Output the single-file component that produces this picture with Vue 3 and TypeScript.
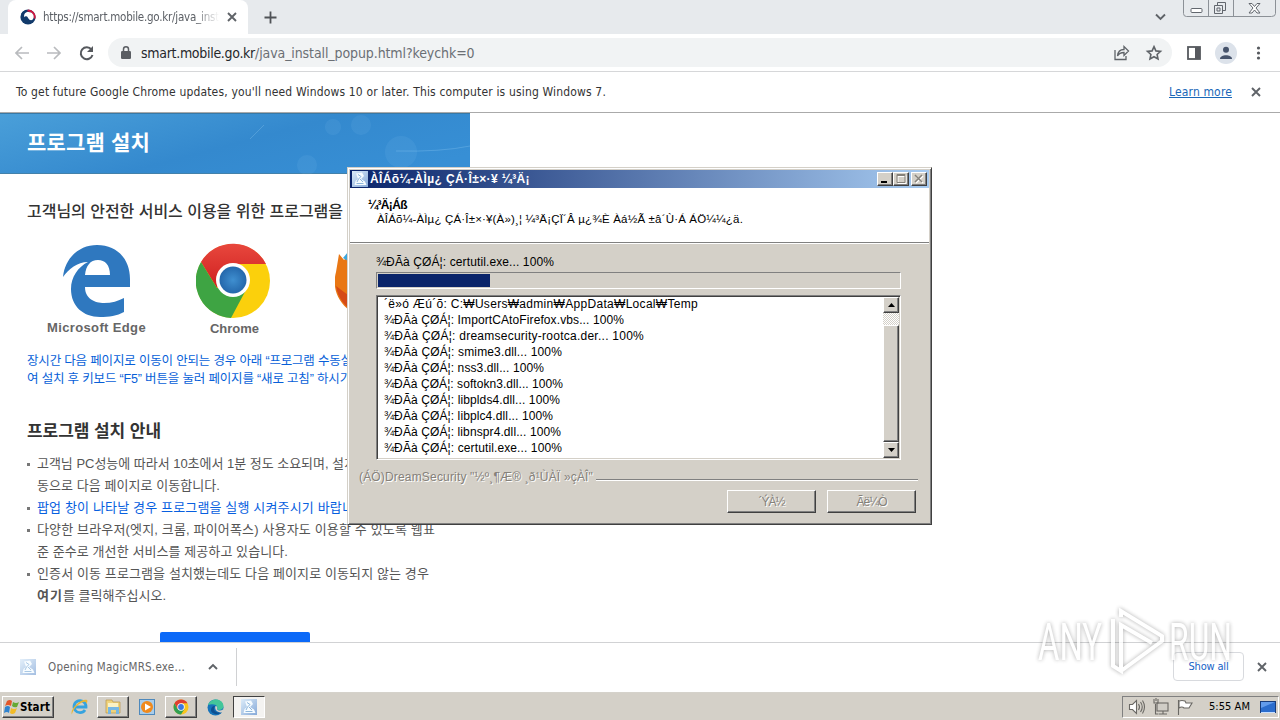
<script setup lang="ts">
import type { Directive } from 'vue'

// Spreads the letters of an inline block so that the run takes the given width.
const vFit: Directive<HTMLElement, number> = {
  mounted(el, binding) {
    const natural = el.getBoundingClientRect().width
    const count = [...(el.textContent ?? '')].length
    el.style.letterSpacing = `${(binding.value - natural) / count}px`
  },
}

interface Line { text: string; width: number }
interface Notice { lines: Line[]; accent?: boolean }

const notices: Notice[] = [
  { lines: [
    { text: '고객님 PC성능에 따라서 10초에서 1분 정도 소요되며, 설치', width: 319 },
    { text: '동으로 다음 페이지로 이동합니다.', width: 183 },
  ] },
  { accent: true, lines: [{ text: '팝업 창이 나타날 경우 프로그램을 실행 시켜주시기 바랍니', width: 317 }] },
  { lines: [
    { text: '다양한 브라우저(엣지, 크롬, 파이어폭스) 사용자도 이용할 수 있도록 웹표', width: 398 },
    { text: '준 준수로 개선한 서비스를 제공하고 있습니다.', width: 251 },
  ] },
  { lines: [{ text: '인증서 이동 프로그램을 설치했는데도 다음 페이지로 이동되지 않는 경우', width: 392 }] },
]

const unpack = '¾ÐÃà ÇØÁ¦: '
const log: Line[] = [
  { text: '´ë»ó Æú´õ: C:₩Users₩admin₩AppData₩Local₩Temp', width: 314 },
  { text: unpack + 'ImportCAtoFirefox.vbs... 100%', width: 240 },
  { text: unpack + 'dreamsecurity-rootca.der... 100%', width: 260 },
  { text: unpack + 'smime3.dll... 100%', width: 178 },
  { text: unpack + 'nss3.dll... 100%', width: 160 },
  { text: unpack + 'softokn3.dll... 100%', width: 179 },
  { text: unpack + 'libplds4.dll... 100%', width: 176 },
  { text: unpack + 'libplc4.dll... 100%', width: 169 },
  { text: unpack + 'libnspr4.dll... 100%', width: 177 },
  { text: unpack + 'certutil.exe... 100%', width: 178 },
]
</script>

<template>
  <div class="screen">
    <svg class="defs" width="0" height="0">
      <defs>
        <linearGradient id="app-bg" x1="0" y1="0" x2="1" y2="1">
          <stop offset="0" stop-color="#dcecf9" /><stop offset="1" stop-color="#86a9d8" />
        </linearGradient>
        <radialGradient id="ball"><stop offset="0" stop-color="#3f8fd0" /><stop offset="1" stop-color="#2467ab" /></radialGradient>
        <linearGradient id="red" x1="0" y1="0" x2="0" y2="1"><stop offset="0" stop-color="#e8473d" /><stop offset="1" stop-color="#cf2020" /></linearGradient>
        <symbol id="installer" viewBox="0 0 16 16">
          <rect width="16" height="16" fill="url(#app-bg)" />
          <path d="M4 2.500l6-1 2 3.500-3 3 4 2.500 1.500 3.500H2.500l1-4L6 8z" fill="#f5fbff" />
          <path d="M6 3.500l3 2L6.500 8 5 11M8 8l3 3M4.500 12.500h7" stroke="#8db6dc" fill="none" />
        </symbol>
        <symbol id="cross" viewBox="0 0 10 10"><path d="M1 1l8 8M9 1L1 9" stroke="#5f6368" stroke-width="1.9" fill="none" /></symbol>
      </defs>
    </svg>

    <header class="tabstrip">
      <div class="tab">
        <svg class="favicon" width="16" height="16" viewBox="0 0 16 16">
          <circle cx="8" cy="8" r="7.6" fill="#123a6b" />
          <path d="M1 5a7.600 7.600 0 0 1 14 5c-.3-3-2-5-5-4.600C7 6 7 4 4.500 4 3 4 2 4.500 1 5z" fill="#123a6b" />
          <path d="M8 .4a7.600 7.600 0 0 1 7.300 9.600L13.500 9C14 5 11 2.500 7 2.500z" fill="#d2163f" />
          <path d="M4.200 8.300C3.500 4.500 6 2.800 8.500 3c3.500 0 6 3 5 6-.8 2.500-2.500 2.500-4 1.800C8 9.800 8 7.800 6.400 7.300c-1-.2-1.800.2-2.200 1z" fill="#fff" />
        </svg>
        <div class="tab-title"><span v-fit="176" class="fit">https://smart.mobile.go.kr/java_inst</span></div>
        <svg class="tab-close" width="10" height="10"><use href="#cross" /></svg>
      </div>
      <svg class="plus" width="13" height="13" viewBox="0 0 13 13"><path d="M6.500 .5v12M.5 6.500h12" stroke="#505357" stroke-width="1.800" /></svg>
      <svg class="tab-search" width="11" height="8" viewBox="0 0 11 8"><path d="M1 1.500l4.500 4.500L10 1.500" stroke="#5f6368" stroke-width="1.900" fill="none" /></svg>
      <svg class="caption" width="94" height="18" viewBox="0 0 94 18">
        <path d="M.5 0v13.500q0 3 3 3h85q4 0 4-3V0M25.500 0v16M50.500 0v16" stroke="#8c9197" fill="none" />
        <rect x="8" y="8.500" width="11" height="4" rx="1" fill="#fff" stroke="#62676e" />
        <path d="M34.500 5v-2.500h8v8H40M31.500 5.500h8v8h-8zM34 8h3v3h-3z" fill="none" stroke="#62676e" />
        <path d="M66 3.500h3l2.500 3 2.500-3h3l-4 4.500 4 5h-3l-2.500-3-2.500 3h-3l4-5z" fill="#fff" stroke="#62676e" />
      </svg>
    </header>

    <div class="toolbar">
      <svg class="nav" width="80" height="18" viewBox="0 0 80 18">
        <g fill="none" stroke="#b9bbbe" stroke-width="1.700">
          <path d="M14 9H1M7 3L1 9l6 6M32 9h13M39 3l6 6-6 6" />
          <path d="M76.500 5.500A6 6 0 1 0 77.500 11" stroke="#56595e" stroke-width="2" />
        </g>
        <path d="M78 2v6h-6z" fill="#56595e" />
      </svg>
      <div class="omnibox">
        <svg class="lock" width="10" height="13" viewBox="0 0 10 13"><rect y="5" width="10" height="8" rx="1.300" fill="#5a5d62" /><path d="M2.500 5V3.300a2.500 2.500 0 0 1 5 0V5" stroke="#5a5d62" stroke-width="1.500" fill="none" /></svg>
        <div class="url"><span v-fit="114" class="fit host">smart.mobile.go.kr</span><span v-fit="219.500" class="fit">/java_install_popup.html?keychk=0</span></div>
        <svg class="omni-icons" width="50" height="18" viewBox="0 0 50 18">
          <g fill="none" stroke="#5f6368" stroke-width="1.300">
            <path d="M2 6v9.500h11V12M4.500 12c.4-4.500 2.500-6.500 6.500-6.500V2.500l4.500 4.500-4.500 4.500v-3c-3 0-5 .8-6.500 3.500z" />
            <path d="M41 2.700l1.900 4.200 4.600.5-3.400 3.100.9 4.500-4-2.300-4 2.300.9-4.500-3.400-3.100 4.600-.5z" stroke-width="1.600" />
          </g>
        </svg>
      </div>
      <svg class="tools" width="82" height="24" viewBox="0 0 82 24">
        <rect x="2" y="6" width="12" height="12" fill="none" stroke="#56595e" stroke-width="1.800" />
        <rect x="9" y="6" width="5" height="12" fill="#56595e" />
        <circle cx="40" cy="12" r="11" fill="#dce2ea" /><circle cx="40" cy="8.700" r="3" fill="#46536b" /><path d="M34 18c0-5 12-5 12 0z" fill="#46536b" />
        <g fill="#56595e"><circle cx="72.500" cy="7" r="1.600" /><circle cx="72.500" cy="12" r="1.600" /><circle cx="72.500" cy="17" r="1.600" /></g>
      </svg>
    </div>

    <div class="infobar">
      <span v-fit="590" class="fit">To get future Google Chrome updates, you'll need Windows 10 or later. This computer is using Windows 7.</span>
      <a v-fit="63" class="fit learn">Learn more</a>
      <svg width="10" height="10"><use href="#cross" /></svg>
    </div>

    <main class="page">
      <div class="banner">
        <svg class="bubbles" width="470" height="61" viewBox="0 0 470 61" fill="#b8e2ff">
          <g opacity=".07"><circle cx="361" cy="11" r="10" /><circle cx="401" cy="38" r="16" /><circle cx="333" cy="13" r="8" /><circle cx="307" cy="51" r="10" /></g>
          <path d="M396 37q45 1 74-5M250 25l14-14" stroke="#b8e2ff" opacity=".22" fill="none" />
        </svg>
        <h1><span v-fit="123" class="fit">프로그램 설치</span></h1>
      </div>
      <h2><span v-fit="316" class="fit">고객님의 안전한 서비스 이용을 위한 프로그램을</span></h2>
      <div class="browsers">
        <figure class="edge">
          <svg width="68" height="74" viewBox="0 0 68 74"><path fill="#2f78bf" d="M0 33C2 13 17 1 34 1c21 0 33 15 33 34v8H22c0 12 10 16 19 16 8 0 14-2 20-5v14c-7 4-15 5-24 5C20 73 8 62 8 45c0-12 7-22 17-27C14 18 6 25 0 33zm22-2h25c0-10-5-15-12-15-8 0-12 6-13 15z" /></svg>
          <figcaption><span v-fit="99" class="fit">Microsoft Edge</span></figcaption>
        </figure>
        <figure class="chrome">
          <svg width="74" height="76" viewBox="-37 -37 74 76">
            <circle r="37" cy="1" fill="#fbd00c" />
            <path d="M-32-18A37 37 0 0 1 33-16H0L-16 8z" fill="url(#red)" />
            <path d="M-32-18A37 37 0 0 0-2 38L14 8-16 8z" fill="#3ea443" />
            <circle r="17" cy="0" fill="#fff" /><circle r="13.500" fill="url(#ball)" />
          </svg>
          <figcaption><span v-fit="49" class="fit">Chrome</span></figcaption>
        </figure>
        <figure class="firefox">
          <svg width="70" height="76" viewBox="0 0 70 76"><circle cx="38" cy="38" r="33" fill="#2b8fd4" /><path d="M1 29L4 11l5 6 2-2 4 4L15 68C2 58-3 44 1 29z" fill="#e97714" /><path d="M8 15l5-6v9z" fill="#3ba6dd" /><path d="M1 43c2 12 8 20 20 28V58z" fill="#d54a16" /></svg>
          <figcaption>Firefox</figcaption>
        </figure>
      </div>
      <p class="hint">
        <span v-fit="325" class="fit">장시간 다음 페이지로 이동이 안되는 경우 아래 “프로그램 수동설</span><br>
        <span v-fit="324" class="fit">여 설치 후 키보드 “F5” 버튼을 눌러 페이지를 “새로 고침” 하시기</span>
      </p>
      <h3><span v-fit="134" class="fit">프로그램 설치 안내</span></h3>
      <ul>
        <li v-for="(notice, i) in notices" :key="i" :class="{ accent: notice.accent }">
          <div v-for="line in notice.lines" :key="line.text"><span v-fit="line.width" class="fit">{{ line.text }}</span></div>
          <div v-if="i === notices.length - 1"><b v-fit="26" class="fit">여기</b><span v-fit="103" class="fit">를 클릭해주십시오.</span></div>
        </li>
      </ul>
      <div class="manual"></div>
    </main>

    <footer class="shelf">
      <div class="download">
        <svg width="16" height="16" opacity=".75"><use href="#installer" /></svg>
        <span v-fit="137" class="fit">Opening MagicMRS.exe...</span>
        <svg class="chevron" width="10" height="7" viewBox="0 0 10 7"><path d="M1 6l4-4 4 4" stroke="#5f6368" stroke-width="1.900" fill="none" /></svg>
      </div>
      <div class="show-all"><span v-fit="40" class="fit">Show all</span></div>
      <svg class="shelf-close" width="10" height="10"><use href="#cross" /></svg>
    </footer>

    <div class="taskbar">
      <div class="start raised">
        <svg width="16" height="16" viewBox="0 0 16 16"><path d="M3 2q3-2 5 0L7 7Q4 5 1 7z" fill="#e2572b" /><path d="M9 3q3 2 6 0l-2 5q-3 1-5-1z" fill="#66a933" /><path d="M1 8q3-2 5 0l-1 6Q3 12 0 14z" fill="#2f83cf" /><path d="M7 9q3 2 6 0l-2 5q-3 2-5 0z" fill="#f2bb27" /></svg>
        <b v-fit="30" class="fit">Start</b>
      </div>
      <div class="task"><svg width="18" height="18" viewBox="0 0 18 18"><path d="M15 12a6 6 0 1 1 1-3H4" fill="none" stroke="#36a3df" stroke-width="2.800" /><path d="M2 16.500C-1 12 11 0 17 2c1 1 0 3-1 4 1-5-7-1-11 4-2 3-3 5-3 6.500z" fill="#e8b635" /></svg></div>
      <div class="task raised"><svg width="18" height="18" viewBox="0 0 18 18"><path d="M2 2h6l1 2h7v11H2z" fill="#efd37c" stroke="#b9964a" stroke-width=".7" /><path d="M4 5h10v4H4z" fill="#fbf2c4" /><path d="M4 16V9h11v7h-3v-4H7v4z" fill="#76b7e4" /></svg></div>
      <div class="task"><svg width="16" height="16" viewBox="0 0 16 16"><rect x=".5" y=".5" width="15" height="15" fill="#a9cdea" stroke="#4e89bc" /><circle cx="8" cy="8" r="6" fill="#f08a1d" /><path d="M6 4.500v7l6-3.500z" fill="#fff" /></svg></div>
      <div class="task raised"><svg width="16" height="16" viewBox="-8 -8 16 16"><circle r="7.500" fill="#f9c51d" /><path d="M-6.500-3.700A7.500 7.500 0 0 1 6.500-3.700H0L-3.500 2z" fill="#df3f31" /><path d="M-6.500-3.700A7.500 7.500 0 0 0 0 7.500L3.500 2h-7z" fill="#31a052" /><circle r="3.700" fill="#fff" /><circle r="2.900" fill="#3c79e0" /></svg></div>
      <div class="task"><svg width="17" height="17" viewBox="0 0 17 17"><circle cx="8.500" cy="8.500" r="8" fill="#1673ba" /><path d="M1 6C4-2 16-1 16.500 7c0 4-5 5-6.500 3 2-4-4-6-9-4z" fill="#43c69a" /><path d="M8 7c-3 4 1 8 7 6-3 3-9 3-11-1 0-3 1-5 4-5z" fill="#0e4f91" /><path d="M8.500 7c2 0 2 2 1.500 3 1 2 4 2 6 .5l1 1-1 2C11 14 7 11 8.500 7z" fill="#d4d0c8" /></svg></div>
      <div class="task pressed"><svg width="16" height="16"><use href="#installer" /></svg></div>
      <div class="tray">
        <svg width="66" height="18" viewBox="0 0 66 18">
          <g fill="#fff" stroke="#6a6864" stroke-width="1.100"><path d="M1.500 6.500h3l4-4v13l-4-4h-3z" /><path d="M10.500 6q2 3 0 6M12.500 4q3.500 5 0 10M14.500 2.500q4 6.500 0 13" fill="none" />
            <rect x="29" y="5" width="11" height="8" fill="#d0cdc6" /><path d="M31 16h8M35 13v3M27.500 6v10h3M26 1v4h4V1M28 0v3" fill="none" /><path d="M50.500 17V2M51 3q3-1 6 0l1 2h6l-3 5h-5q-2-2-5 0z" /></g>
        </svg>
        <span v-fit="41" class="fit">5:55 AM</span>
        <svg class="desk" width="16" height="13" viewBox="0 0 16 13"><rect x=".5" y=".5" width="15" height="11" fill="#2b6dcd" stroke="#183c7a" /><path d="M1 1h14L1 7z" fill="#629cec" /><path d="M1 11.500h14" stroke="#c8dfff" /></svg>
      </div>
    </div>

    <section class="dialog">
      <div class="titlebar">
        <svg width="16" height="16"><use href="#installer" /></svg>
        <b v-fit="160" class="fit">ÀÎÁõ¼-ÀÌµ¿ ÇÁ·Î±×·¥ ¼³Ä¡</b>
        <div class="controls">
          <i><svg width="12" height="10"><path d="M2 8h6" stroke="#000" stroke-width="2" /></svg></i>
          <i><svg width="12" height="10"><path d="M2 .5h8v8H2zM2 1.500h8" stroke="#fff" fill="none" transform="translate(1 1)" /><path d="M2 .5h8v8H2zM2 1.500h8" stroke="#85817a" fill="none" /></svg></i>
          <i><svg width="12" height="10"><path d="M3 2l7 7M10 2L3 9" stroke="#fff" stroke-width="1.500" /><path d="M2 1l7 7M9 1L2 8" stroke="#85817a" stroke-width="1.500" /></svg></i>
        </div>
      </div>
      <div class="intro">
        <div class="intro-title"><b v-fit="39" class="fit">¼³Ä¡Áß</b></div>
        <div class="intro-text"><span v-fit="366" class="fit">ÀÎÁõ¼-ÀÌµ¿ ÇÁ·Î±×·¥(À»)¸¦ ¼³Ä¡ÇÏ´Â µ¿¾È Àá½Ã ±â´Ù·Á ÁÖ¼¼¿ä.</span></div>
      </div>
      <div class="status"><span v-fit="178" class="fit">{{ unpack }}certutil.exe... 100%</span></div>
      <div class="progress"><div class="bar"></div></div>
      <div class="log">
        <div class="rows"><div v-for="row in log" :key="row.text"><span v-fit="row.width" class="fit">{{ row.text }}</span></div></div>
        <div class="scroll">
          <div class="arrow"><svg width="7" height="4"><path d="M0 4l3.500-4L7 4z" /></svg></div>
          <div class="thumb"></div>
          <div class="arrow"><svg width="7" height="4"><path d="M0 0h7L3.500 4z" /></svg></div>
        </div>
      </div>
      <div class="brand"><span v-fit="234" class="fit">(ÁÖ)DreamSecurity "½º¸¶Æ® ¸ð¹ÙÀÏ »çÀÎ"</span><hr></div>
      <div class="buttons">
        <div class="button"><span v-fit="26" class="fit">´ÝÀ½</span></div>
        <div class="button"><span v-fit="30" class="fit">Ãë¼Ò</span></div>
      </div>
    </section>

    <svg class="watermark" width="204" height="72" viewBox="0 0 204 72">
      <g fill="#fff">
        <text x="4" y="55" textLength="64" lengthAdjust="spacingAndGlyphs">ANY</text>
        <text x="135" y="55" textLength="63" lengthAdjust="spacingAndGlyphs">RUN</text>
        <path d="M79 14v47l8 5V20l31 18M87 12V6l41 25v5L87 66" fill="none" stroke="#fff" stroke-width="4" />
      </g>
    </svg>
  </div>
</template>

<style>
html, body { overflow: hidden; background: #fff; }
</style>

<style scoped>
* { box-sizing: border-box; }
.screen { position: relative; width: 1280px; height: 720px; display: flex; flex-direction: column; overflow: hidden; background: #fff; font: 12px/16px "DejaVu Sans Condensed", "DejaVu Sans", "Noto Sans CJK KR", sans-serif; color: #333; }
.defs { position: absolute; }
svg { display: block; flex: none; }
.fit { display: inline-block; white-space: pre; flex: none; }
.tabstrip { height: 34px; flex: none; display: flex; align-items: flex-start; background: #e7eaed; padding-left: 8px; }
.tab { width: 240px; height: 34px; border-radius: 8px 8px 0 0; background: #fff; display: flex; align-items: center; padding-left: 12px; }
.tab-title { width: 176px; margin-left: 7px; overflow: hidden; color: #5c6066; font-size: 11.500px; -webkit-mask-image: linear-gradient(90deg, #000 86%, transparent); mask-image: linear-gradient(90deg, #000 86%, transparent); }
.tab-close { margin-left: 8px; }
.plus { margin: 11px 0 0 16px; }
.tab-search { margin: 13px 17px 0 auto; }
.caption { margin-right: 3px; }
.toolbar { height: 38px; flex: none; display: flex; align-items: center; border-bottom: 1px solid #d6d7d9; padding-left: 15px; }
.nav { width: 80px; }
.omnibox { width: 1064px; height: 29px; margin-left: 13px; border-radius: 15px; background: #f1f3f4; display: flex; align-items: center; padding-left: 13px; }
.url { margin-left: 10px; font-size: 14px; color: #6b6f74; }
.host { color: #25272b; }
.omni-icons { margin-left: auto; margin-right: 9px; }
.tools { margin-left: 14px; }
.infobar { height: 41px; flex: none; display: flex; align-items: center; padding: 0 19px 0 16px; border-bottom: 1px solid #aaa; }
.learn { margin-left: auto; margin-right: 19px; color: #1967b8; text-decoration: underline; }
.page { height: 529px; flex: none; overflow: hidden; font-family: "Liberation Sans", "Noto Sans CJK KR", sans-serif; }
.banner { position: relative; width: 470px; height: 61px; padding: 14px 0 0 27px; background: linear-gradient(165deg, #4a9fd9, #3489ce 50%, #378fd5 90%); border-top: 1px solid #3879a6; border-bottom: 1px solid #4381aa; }
.bubbles { position: absolute; left: 0; top: 0; }
h1, h2, h3, p, ul, figure { margin: 0; padding: 0; }
h1 { position: relative; color: #fff; font-size: 21px; line-height: 30px; font-weight: 600; }
h2 { margin: 25px 0 0 27px; font-size: 16px; line-height: 26px; font-weight: 500; color: #333; }
.browsers { display: flex; margin: 18px 0 0 47px; height: 95px; }
figure { display: flex; flex-direction: column; align-items: center; }
figcaption { font-size: 13px; font-weight: 700; line-height: 16px; color: #666; white-space: nowrap; }
.edge { width: 99px; padding-top: 1px; }
.edge figcaption { margin-top: 2px; }
.chrome { width: 74px; margin-left: 50px; }
.chrome figcaption { margin: 2px 0 0 3px; }
.firefox { width: 70px; margin-left: 65px; }
.firefox figcaption { margin-top: 2px; }
.hint { margin: 14px 0 0 27px; font-size: 12.500px; line-height: 18px; color: #075fd8; white-space: nowrap; }
.hint .fit { vertical-align: top; }
h3 { margin: 32px 0 0 27px; font-size: 17px; line-height: 24px; font-weight: 600; color: #333; }
ul { list-style: none; margin: 9px 0 0 27px; font-size: 13px; line-height: 22px; color: #555; }
li { position: relative; padding-left: 10px; white-space: nowrap; }
li div { height: 22px; }
li::before { content: ""; position: absolute; left: 0; top: 10px; width: 3px; height: 3px; background: #777; }
.accent { color: #075fe0; }
.manual { margin: 25px 0 0 160px; width: 150px; height: 38px; border-radius: 2px; background: #0b69f8; }
.shelf { height: 51px; flex: none; display: flex; align-items: center; border-top: 1px solid #d1d2d4; border-bottom: 1px solid #d5d2cb; padding-bottom: 2px; font-size: 11.500px; }
.download { width: 237px; height: 38px; display: flex; align-items: center; padding-left: 20px; border-right: 1px solid #d0d1d3; color: #666; }
.download .fit { margin-left: 12px; }
.chevron { margin-left: 23px; }
.show-all { width: 71px; height: 29px; margin-left: auto; border: 1px solid #d8dade; border-radius: 4px; display: grid; place-items: center; color: #1763c6; font-size: 11px; }
.shelf-close { margin: 0 13px; }
.taskbar { height: 27px; flex: none; background: #d4d0c8; display: flex; align-items: center; padding: 1px 1px 0 2px; color: #000; font-family: "DejaVu Sans Condensed", "DejaVu Sans", sans-serif; font-size: 11px; }
.raised { border: 1px solid; border-color: #fff #404040 #404040 #fff; box-shadow: inset -1px -1px #808080; }
.start { width: 52px; height: 22px; display: flex; align-items: center; padding-left: 1px; margin-right: 9px; }
.start b { font-size: 11.500px; }
.task { width: 32px; height: 22px; display: grid; place-items: center; margin-right: 2px; }
.pressed { border: 1px solid; border-color: #404040 #fff #fff #404040; background: #f4f3f1; }
.tray { margin-left: auto; width: 157px; height: 22px; border: 1px solid; border-color: #808080 #fff #fff #808080; display: flex; align-items: center; padding-left: 5px; }
.tray .fit { margin-left: 15px; }
.desk { margin-left: 10px; }
.dialog { position: absolute; left: 347px; top: 167px; width: 585px; height: 358px; padding: 1px; border: 1px solid; border-color: #d4d0c8 #404040 #404040 #d4d0c8; box-shadow: inset 1px 1px #fff, inset -1px -1px #808080; background: #d4d0c8; font: 12px/16px "Liberation Sans", "Noto Sans CJK KR", sans-serif; color: #000; }
.titlebar { margin: 1px 1px 0; height: 18px; display: flex; align-items: center; padding: 0 2px; background: linear-gradient(90deg, #0a246a, #a6caf0); color: #fff; font-size: 12px; }
.titlebar .fit { margin-left: 2px; }
.controls { margin-left: auto; display: flex; }
.controls i { width: 16px; height: 14px; border: 1px solid; border-color: #fff #404040 #404040 #fff; box-shadow: inset -1px -1px #808080; background: #d4d0c8; padding: 1px; overflow: hidden; }
.controls i:last-child { margin-left: 2px; }
.intro { margin: 0 1px; height: 55px; padding: 9px 0 0 18px; background: #fff; border-bottom: 1px solid #808080; box-shadow: 0 1px #fff; }
.intro-title { height: 14px; line-height: 16px; }
.intro-text { padding-left: 9px; font-size: 11.500px; line-height: 16px; }
.status { margin: 10px 0 0 27px; height: 19px; line-height: 18px; }
.progress { margin: 0 0 0 27px; width: 525px; height: 17px; padding: 1px; border: 1px solid; border-color: #808080 #fff #fff #808080; }
.bar { width: 112px; height: 13px; background: #0a246a; }
.log { margin: 6px 0 0 27px; width: 525px; height: 165px; display: flex; background: #fff; border: 1px solid; border-color: #808080 #fff #fff #808080; box-shadow: inset 1px 1px #404040, inset -1px -1px #d4d0c8; padding: 1px; }
.rows { width: 505px; padding-left: 6px; line-height: 15px; }
.rows div { height: 16px; }
.scroll { width: 16px; height: 161px; display: flex; flex-direction: column; background: repeating-conic-gradient(#fff 0 25%, #d4d0c8 0 50%) 0 0 / 2px 2px; }
.arrow, .thumb { border: 1px solid; border-color: #fff #404040 #404040 #fff; box-shadow: inset -1px -1px #808080; background: #d4d0c8; }
.arrow { height: 16px; flex: none; display: grid; place-items: center; }
.thumb { margin-top: 12px; flex: 1; }
.brand { margin: 8px 12px 0 10px; height: 18px; display: flex; align-items: center; color: #85817a; text-shadow: 1px 1px #fff; }
hr { flex: 1; margin: 5px 0 0 3px; border: 0; height: 2px; background: linear-gradient(#808080 50%, #fff 50%); }
.buttons { display: flex; justify-content: flex-end; gap: 11px; margin: 4px 14px 0 0; }
.button { width: 89px; height: 23px; display: grid; place-items: center; border: 1px solid; border-color: #fff #404040 #404040 #fff; box-shadow: inset -1px -1px #808080; color: #85817a; text-shadow: 1px 1px #fff; }
.watermark { position: absolute; left: 1034px; top: 605px; filter: drop-shadow(0 0 2px rgba(0, 0, 0, .4)); opacity: .8; overflow: visible; }
.watermark text { font: 52px Roboto, sans-serif; }
</style>
